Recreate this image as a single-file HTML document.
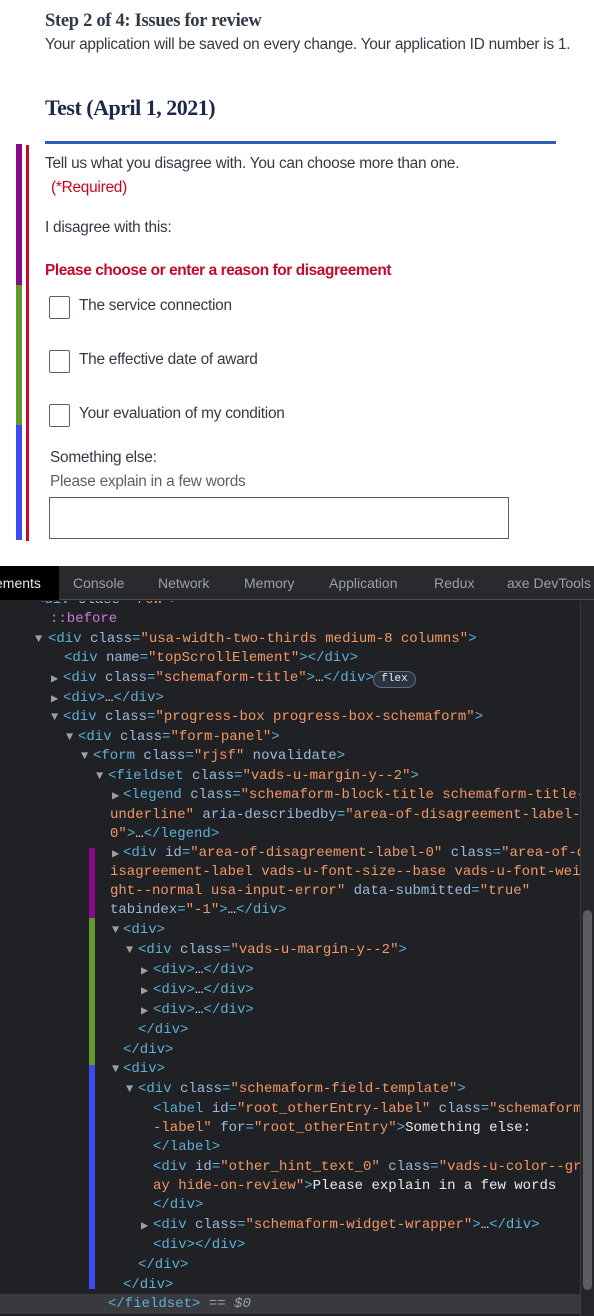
<!DOCTYPE html>
<html><head><meta charset="utf-8"><style>
*{margin:0;padding:0;box-sizing:border-box}
body{width:594px;height:1316px;overflow:hidden;background:#fff;position:relative;font-family:"Liberation Sans",sans-serif;color:#323a45}
.a{position:absolute;white-space:nowrap}
.s{font-size:15.4px;letter-spacing:-0.25px;color:#323a45}
.bar{position:absolute}
.cb{position:absolute;left:49px;width:21px;height:23px;border:1px solid #5b616b;border-radius:2px;background:#fff}
#dt{position:absolute;left:0;top:566px;width:594px;height:750px;background:#202124;font-family:"Liberation Mono",monospace;font-size:14px}
.tabs{position:absolute;left:0;top:0;width:594px;height:34px;background:#292a2d;border-bottom:1px solid #494c50;font-family:"Liberation Sans",sans-serif;font-size:14px;color:#9aa0a6}
.tabs span{position:absolute;top:9px}
.l{position:absolute;white-space:pre;color:#5db0d7;line-height:19.6px;height:19.6px}
.n{color:#9bbbdc}.v{color:#f29766}.t{color:#e8eaed}.g{color:#9aa0a6}
.ar{position:absolute;color:#9aa0a6;font-size:12px;white-space:pre}
</style></head><body>
<div class="a" style="left:45px;top:11px;font-family:'Liberation Serif',serif;font-weight:bold;font-size:18.5px;color:#323a45;letter-spacing:-0.3px">Step 2 of 4: Issues for review</div>
<div class="a s" style="left:45px;top:36px">Your application will be saved on every change. Your application ID number is 1.</div>
<div class="a" style="left:45px;top:95px;font-family:'Liberation Serif',serif;font-weight:bold;font-size:22px;color:#1b2a4a;letter-spacing:-0.5px">Test (April 1, 2021)</div>
<div class="bar" style="left:45px;top:141px;width:511px;height:3px;background:#2e5fb0"></div>
<div class="bar" style="left:16px;top:144px;width:6px;height:141px;background:#8b0a8c"></div>
<div class="bar" style="left:16px;top:285px;width:6px;height:140px;background:#5f9a2b"></div>
<div class="bar" style="left:16px;top:425px;width:6px;height:115px;background:#3b4cf5"></div>
<div class="bar" style="left:26px;top:145px;width:3px;height:396px;background:#c8082d"></div>
<div class="a s" style="left:45px;top:155px">Tell us what you disagree with. You can choose more than one.</div>
<div class="a s" style="left:51px;top:179px;color:#d0021b">(*Required)</div>
<div class="a s" style="left:45px;top:219px">I disagree with this:</div>
<div class="a s" style="left:45px;top:262px;color:#c8082d;font-weight:bold;letter-spacing:-0.4px">Please choose or enter a reason for disagreement</div>
<div class="cb" style="top:296px"></div><div class="a s" style="left:79px;top:297px">The service connection</div>
<div class="cb" style="top:350px"></div><div class="a s" style="left:79px;top:351px">The effective date of award</div>
<div class="cb" style="top:404px"></div><div class="a s" style="left:79px;top:405px">Your evaluation of my condition</div>
<div class="a s" style="left:50px;top:449px">Something else:</div>
<div class="a s" style="left:50px;top:473px;color:#5b616b">Please explain in a few words</div>
<div style="position:absolute;left:49px;top:497px;width:460px;height:42px;border:1px solid #5b616b"></div>

<div id="dt">
<div class="tabs">
<div style="position:absolute;left:0;top:0;width:59px;height:34px;background:#000"></div>
<span style="left:-5px;color:#e8eaed">ements</span><span style="left:73px">Console</span><span style="left:158px">Network</span><span style="left:244px">Memory</span><span style="left:329px">Application</span><span style="left:434px">Redux</span><span style="left:507px">axe DevTools</span>
</div>
<div style="position:absolute;left:580px;top:35px;width:14px;height:715px;background:#242528;border-left:1px solid #3a3b3e"></div>
<div style="position:absolute;left:583px;top:344px;width:9px;height:380px;background:#5c5d60;border-radius:5px"></div>
<div style="position:absolute;left:0;top:728px;width:580px;height:20px;background:#393a3d"></div>
<div class="bar" style="left:89px;top:282px;width:6px;height:70px;background:#8b0a8c"></div>
<div class="bar" style="left:89px;top:352px;width:6px;height:147px;background:#5f9a2b"></div>
<div class="bar" style="left:89px;top:499px;width:6px;height:224px;background:#3b4cf5"></div>
<div style="position:absolute;left:0;top:35px;width:580px;height:690px;overflow:hidden">
<div style="position:absolute;left:0;top:2px;width:580px;height:700px">
<div class="l" style="left:36px;top:-12px">&lt;div <span class="n">class</span>=<span class="v">"row"</span>&gt;</div>
<div class="l" style="left:50px;top:7px;color:#c97bd6">::before</div>
<div class="ar" style="left:35px;top:29px">▼</div><div class="l" style="left:48px;top:27px">&lt;div <span class="n">class</span>=<span class="v">"usa-width-two-thirds medium-8 columns"</span>&gt;</div>
<div class="l" style="left:64px;top:46px">&lt;div <span class="n">name</span>=<span class="v">"topScrollElement"</span>&gt;&lt;/div&gt;</div>
<div class="ar" style="left:51px;top:68px">▶</div><div class="l" style="left:63px;top:66px">&lt;div <span class="n">class</span>=<span class="v">"schemaform-title"</span>&gt;<span class="t">…</span>&lt;/div&gt;</div>
<div style="position:absolute;left:373px;top:68px;width:43px;height:17px;border:1px solid #5b7080;border-radius:9px;background:#2a3340;color:#e8eaed;font-size:11px;text-align:center;line-height:15px">flex</div>
<div class="ar" style="left:51px;top:88px">▶</div><div class="l" style="left:63px;top:86px">&lt;div&gt;<span class="t">…</span>&lt;/div&gt;</div>
<div class="ar" style="left:51px;top:107px">▼</div><div class="l" style="left:63px;top:105px">&lt;div <span class="n">class</span>=<span class="v">"progress-box progress-box-schemaform"</span>&gt;</div>
<div class="ar" style="left:66px;top:127px">▼</div><div class="l" style="left:78px;top:125px">&lt;div <span class="n">class</span>=<span class="v">"form-panel"</span>&gt;</div>
<div class="ar" style="left:81px;top:146px">▼</div><div class="l" style="left:93px;top:144px">&lt;form <span class="n">class</span>=<span class="v">"rjsf"</span> <span class="n">novalidate</span>&gt;</div>
<div class="ar" style="left:96px;top:166px">▼</div><div class="l" style="left:108px;top:164px">&lt;fieldset <span class="n">class</span>=<span class="v">"vads-u-margin-y--2"</span>&gt;</div>
<div class="ar" style="left:112px;top:185px">▶</div><div class="l" style="left:123px;top:183px">&lt;legend <span class="n">class</span>=<span class="v">"schemaform-block-title schemaform-title-</span></div>
<div class="l" style="left:110px;top:203px"><span class="v">underline"</span> <span class="n">aria-describedby</span>=<span class="v">"area-of-disagreement-label-</span></div>
<div class="l" style="left:110px;top:222px"><span class="v">0"</span>&gt;<span class="t">…</span>&lt;/legend&gt;</div>
<div class="ar" style="left:112px;top:243px">▶</div><div class="l" style="left:123px;top:241px">&lt;div <span class="n">id</span>=<span class="v">"area-of-disagreement-label-0"</span> <span class="n">class</span>=<span class="v">"area-of-d</span></div>
<div class="l" style="left:110px;top:260px"><span class="v">isagreement-label vads-u-font-size--base vads-u-font-wei</span></div>
<div class="l" style="left:110px;top:279px"><span class="v">ght--normal usa-input-error"</span> <span class="n">data-submitted</span>=<span class="v">"true"</span></div>
<div class="l" style="left:110px;top:298px"><span class="n">tabindex</span>=<span class="v">"-1"</span>&gt;<span class="t">…</span>&lt;/div&gt;</div>
<div class="ar" style="left:112px;top:320px">▼</div><div class="l" style="left:123px;top:318px">&lt;div&gt;</div>
<div class="ar" style="left:126px;top:340px">▼</div><div class="l" style="left:138px;top:338px">&lt;div <span class="n">class</span>=<span class="v">"vads-u-margin-y--2"</span>&gt;</div>
<div class="ar" style="left:141px;top:360px">▶</div><div class="l" style="left:153px;top:358px">&lt;div&gt;<span class="t">…</span>&lt;/div&gt;</div>
<div class="ar" style="left:141px;top:380px">▶</div><div class="l" style="left:153px;top:378px">&lt;div&gt;<span class="t">…</span>&lt;/div&gt;</div>
<div class="ar" style="left:141px;top:400px">▶</div><div class="l" style="left:153px;top:398px">&lt;div&gt;<span class="t">…</span>&lt;/div&gt;</div>
<div class="l" style="left:138px;top:418px">&lt;/div&gt;</div>
<div class="l" style="left:123px;top:438px">&lt;/div&gt;</div>
<div class="ar" style="left:112px;top:459px">▼</div><div class="l" style="left:123px;top:457px">&lt;div&gt;</div>
<div class="ar" style="left:126px;top:479px">▼</div><div class="l" style="left:138px;top:477px">&lt;div <span class="n">class</span>=<span class="v">"schemaform-field-template"</span>&gt;</div>
<div class="l" style="left:153px;top:497px">&lt;label <span class="n">id</span>=<span class="v">"root_otherEntry-label"</span> <span class="n">class</span>=<span class="v">"schemaform</span></div>
<div class="l" style="left:153px;top:516px"><span class="v">-label"</span> <span class="n">for</span>=<span class="v">"root_otherEntry"</span>&gt;<span class="t">Something else:</span></div>
<div class="l" style="left:153px;top:535px">&lt;/label&gt;</div>
<div class="l" style="left:153px;top:555px">&lt;div <span class="n">id</span>=<span class="v">"other_hint_text_0"</span> <span class="n">class</span>=<span class="v">"vads-u-color--gr</span></div>
<div class="l" style="left:153px;top:574px"><span class="v">ay hide-on-review"</span>&gt;<span class="t">Please explain in a few words</span></div>
<div class="l" style="left:153px;top:593px">&lt;/div&gt;</div>
<div class="ar" style="left:141px;top:615px">▶</div><div class="l" style="left:153px;top:613px">&lt;div <span class="n">class</span>=<span class="v">"schemaform-widget-wrapper"</span>&gt;<span class="t">…</span>&lt;/div&gt;</div>
<div class="l" style="left:153px;top:633px">&lt;div&gt;&lt;/div&gt;</div>
<div class="l" style="left:138px;top:653px">&lt;/div&gt;</div>
<div class="l" style="left:123px;top:673px">&lt;/div&gt;</div>
</div>
</div>
<div class="l" style="left:108px;top:729px">&lt;/fieldset&gt; <span class="g">== <i>$0</i></span></div>
</div>
</body></html>
